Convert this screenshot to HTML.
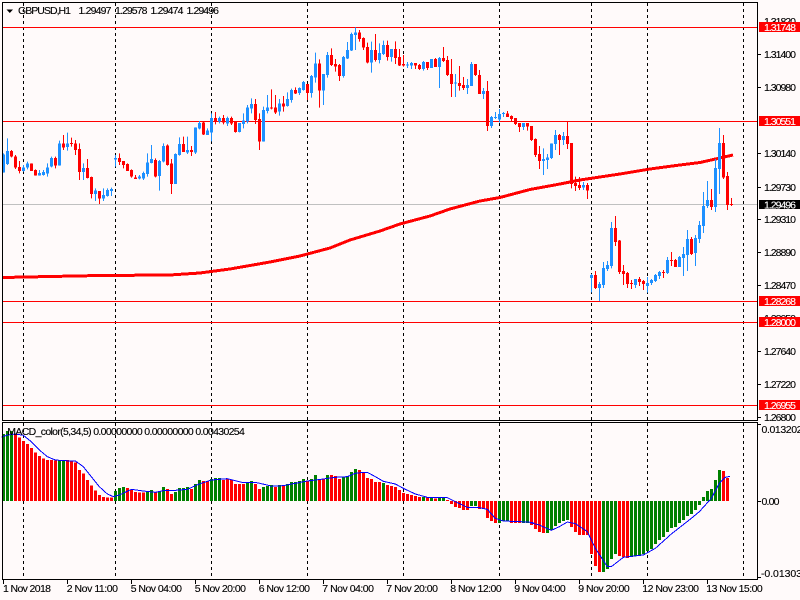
<!DOCTYPE html>
<html><head><meta charset="utf-8"><style>
html,body{margin:0;padding:0;background:#fffafa;width:800px;height:600px;overflow:hidden}
svg{display:block;position:absolute;left:0;top:0}
text{font-family:"Liberation Sans",sans-serif;font-size:10.5px;fill:#000;stroke:#000;stroke-width:.12px}
.w{fill:#fff;stroke:#fff}
path,line,polyline,rect{shape-rendering:crispEdges}
</style></head><body>
<svg width="800" height="600" viewBox="0 0 800 600">
<rect width="800" height="600" fill="#fffafa"/>
<!-- grid -->
<path d="M23.5 3V579M115.5 3V579M211.5 3V579M307.5 3V579M403.5 3V579M499.5 3V579M591.5 3V579M647.5 3V579M743.5 3V579" stroke="#000" stroke-width="1" stroke-dasharray="3 3" fill="none"/>
<!-- hlines -->
<path d="M3 27.5H757M3 121.5H757M3 301.5H757M3 322.5H757M3 405.5H757" stroke="#f00" stroke-width="1" fill="none"/>
<path d="M3 204.5H757" stroke="#c0c0c0" stroke-width="1" fill="none"/>
<!-- MA -->
<polyline fill="none" stroke="#f00" stroke-width="3" points="3,277.5 50,276.5 100,275.5 170,275 200,273 230,269 270,262 300,256 330,248 350,240 380,231 400,224 430,216 450,209 480,201 500,197.5 530,189.5 560,184 580,180 600,177 620,174 650,169 680,165 700,162.5 720,158 733,155"/>
<!-- candles -->
<g transform="scale(1,0.33333)" fill="none">
<path stroke="#1e90ff" stroke-width="1" d="M3.5 460V518M7.5 415V495M23.5 495V515M27.5 485V508M39.5 510V527M43.5 510V527M47.5 490V530M51.5 470V502M59.5 422V497M67.5 398V452M83.5 490V540M95.5 565V603M103.5 565V603M107.5 565V590M111.5 563V588M115.5 465V500M139.5 525V538M143.5 515V540M147.5 460V530M151.5 435V490M159.5 480V572M163.5 430V487M175.5 460V552M179.5 412V467M187.5 410V462M195.5 382V462M199.5 363V388M207.5 385V405M211.5 340V424M219.5 350V370M227.5 350V378M239.5 369V397M243.5 340V385M247.5 315V370M251.5 295V340M263.5 320V425M267.5 285V340M279.5 297V347M287.5 277V320M291.5 266V308M299.5 262V285M303.5 243V272M311.5 225V293M315.5 158V248M323.5 222V315M327.5 156V233M343.5 168V233M347.5 126V177M351.5 98V153M355.5 82V150M371.5 125V218M379.5 130V190M383.5 122V165M391.5 147V185M407.5 186V204M411.5 186V207M423.5 183V212M431.5 177V204M439.5 171V264M455.5 222V291M467.5 237V282M471.5 186V258M483.5 264V297M491.5 348V384M495.5 336V357M499.5 327V367M503.5 336V351M523.5 369V390M543.5 445V525M547.5 462V507M551.5 430V477M555.5 390V450M563.5 396V435M583.5 546V570M703.5 576V699M707.5 543V624M715.5 477V636M719.5 384V582"/>
<path stroke="#1e90ff" stroke-width="3" d="M3.5 463V518M7.5 453V492M23.5 502V513M27.5 490V503M39.5 519V527M43.5 516V525M47.5 502V520M51.5 474V500M59.5 430V497M67.5 430V441M83.5 504V516M95.5 572V582M103.5 585V595M107.5 570V588M111.5 567V573M115.5 474V478M139.5 530V535M143.5 519V535M147.5 487V522M151.5 477V489M159.5 483V528M163.5 438V485M175.5 462V552M179.5 432V465M187.5 450V457M195.5 382V458M199.5 369V386M207.5 392V405M211.5 354V398M219.5 354V365M227.5 354V370M239.5 369V396M243.5 362V372M247.5 323V365M251.5 312V326M263.5 330V425M267.5 322V333M279.5 310V335M287.5 297V318M291.5 270V300M299.5 264V279M303.5 246V270M311.5 228V279M315.5 190V232M323.5 222V272M327.5 165V225M343.5 171V228M347.5 150V175M351.5 102V152M355.5 97V105M371.5 150V188M379.5 159V180M383.5 135V162M391.5 147V171M407.5 194V197M411.5 189V197M423.5 186V207M431.5 177V204M439.5 174V201M455.5 248V250M467.5 255V264M471.5 192V258M483.5 273V282M491.5 351V378M495.5 351V354M499.5 342V358M503.5 339V342M523.5 369V381M543.5 477V483M547.5 472V480M551.5 430V474M555.5 405V432M563.5 408V420M583.5 555V562M703.5 618V678M707.5 600V618M715.5 504V621M719.5 429V507"/>
<path stroke="#f00" stroke-width="1" d="M11.5 450V472M15.5 465V507M19.5 483V520M31.5 490V513M35.5 508V527M55.5 470V505M63.5 405V450M71.5 413V440M75.5 420V465M79.5 430V540M87.5 477V535M91.5 530V595M99.5 573V612M119.5 460V495M123.5 483V505M127.5 490V513M131.5 508V533M135.5 525V537M155.5 475V532M167.5 433V497M171.5 477V582M183.5 410V456M191.5 438V468M203.5 365V405M215.5 336V373M223.5 345V373M231.5 350V375M235.5 364V398M255.5 297V372M259.5 340V450M271.5 268V328M275.5 285V342M283.5 288V335M295.5 262V282M307.5 252V300M319.5 178V323M331.5 145V198M335.5 177V215M339.5 192V243M359.5 90V125M363.5 112V150M367.5 128V190M375.5 102V185M387.5 122V182M395.5 124V192M399.5 147V198M403.5 165V200M415.5 189V207M419.5 192V210M427.5 186V210M435.5 174V201M443.5 141V186M447.5 168V228M451.5 177V291M459.5 198V272M463.5 231V270M475.5 192V228M479.5 210V282M487.5 243V393M507.5 333V351M511.5 346V363M515.5 354V375M519.5 369V396M527.5 369V392M531.5 378V423M535.5 415V471M539.5 438V507M559.5 402V465M567.5 366V447M571.5 429V565M575.5 530V573M579.5 531V570M587.5 549V597M711.5 567V630M723.5 405V537M727.5 516V630M731.5 594V618"/>
<path stroke="#f00" stroke-width="3" d="M11.5 453V470M15.5 470V503M19.5 501V513M31.5 490V513M35.5 510V527M55.5 474V497M63.5 430V442M71.5 429V432M75.5 430V450M79.5 447V516M87.5 504V534M91.5 531V582M99.5 573V595M119.5 474V486M123.5 483V495M127.5 492V513M131.5 510V530M135.5 532V537M155.5 480V530M167.5 437V495M171.5 490V552M183.5 432V456M191.5 450V456M203.5 368V404M215.5 354V365M223.5 354V367M231.5 354V370M235.5 364V396M255.5 312V360M259.5 357V425M271.5 322V325M275.5 322V338M283.5 310V320M295.5 270V280M307.5 252V279M319.5 190V272M331.5 165V195M335.5 192V200M339.5 195V228M359.5 97V117M363.5 114V143M367.5 141V188M375.5 150V180M387.5 135V171M395.5 147V174M399.5 171V197M403.5 192V197M415.5 189V197M419.5 195V207M427.5 186V204M435.5 177V201M443.5 174V183M447.5 180V225M451.5 222V252M459.5 249V258M463.5 255V264M475.5 192V225M479.5 225V282M487.5 273V378M507.5 340V351M511.5 348V357M515.5 354V372M519.5 369V381M527.5 369V380M531.5 378V420M535.5 417V465M539.5 462V483M559.5 405V420M567.5 408V432M571.5 429V552M575.5 549V558M579.5 555V564M587.5 555V572M711.5 600V621M723.5 429V532M727.5 528V615M731.5 612V615"/>
</g>
<g transform="translate(0,200) scale(1,0.33333)" fill="none">
<path stroke="#1e90ff" stroke-width="1" d="M591.5 222V277M599.5 246V303M603.5 186V264M607.5 183V213M611.5 66V205M635.5 237V264M647.5 231V278M651.5 237V255M655.5 222V246M659.5 213V237M667.5 171V222M679.5 168V201M683.5 141V228M687.5 90V213M695.5 105V198M699.5 63V129"/>
<path stroke="#1e90ff" stroke-width="3" d="M591.5 225V234M599.5 252V264M603.5 204V255M607.5 195V207M611.5 84V198M635.5 237V255M647.5 249V258M651.5 240V249M655.5 225V243M659.5 216V228M667.5 180V219M679.5 171V201M683.5 162V174M687.5 117V165M695.5 114V159M699.5 75V117"/>
<path stroke="#f00" stroke-width="1" d="M595.5 213V267M615.5 48V138M619.5 120V222M623.5 195V255M627.5 216V264M631.5 240V267M639.5 231V258M643.5 240V270M663.5 210V234M671.5 156V198M675.5 177V201M691.5 111V165"/>
<path stroke="#f00" stroke-width="3" d="M595.5 225V264M615.5 84V126M619.5 122V216M623.5 213V222M627.5 219V252M631.5 249V252M639.5 237V246M643.5 243V252M663.5 216V219M671.5 180V183M675.5 180V201M691.5 117V162"/>
</g>
<!-- MACD bars -->
<g transform="translate(0,420) scale(1,0.33333)" fill="none" stroke-width="3">
<path stroke="#008000" d="M3.5 243V42M7.5 243V33M11.5 243V33M59.5 243V120M63.5 243V120M115.5 243V213M119.5 243V204M123.5 243V201M147.5 243V213M151.5 243V210M159.5 243V213M163.5 243V201M175.5 243V216M179.5 243V204M183.5 243V204M187.5 243V201M195.5 243V192M199.5 243V180M211.5 243V177M215.5 243V174M219.5 243V174M247.5 243V186M251.5 243V183M263.5 243V201M267.5 243V198M271.5 243V195M279.5 243V195M287.5 243V192M291.5 243V186M295.5 243V186M299.5 243V183M303.5 243V177M311.5 243V177M315.5 243V165M327.5 243V165M343.5 243V171M347.5 243V168M351.5 243V156M355.5 243V147M383.5 243V189M423.5 243V231M431.5 243V233M439.5 243V233M443.5 243V233M471.5 243V258M475.5 243V258M499.5 243V309M503.5 243V303M507.5 243V303M523.5 243V309M527.5 243V309M547.5 243V339M551.5 243V330M555.5 243V318M559.5 243V309M563.5 243V303M567.5 243V300M603.5 243V456M607.5 243V447M611.5 243V417M615.5 243V402M631.5 243V411M635.5 243V408M639.5 243V408M643.5 243V402M647.5 243V393M651.5 243V387M655.5 243V372M659.5 243V360M663.5 243V351M667.5 243V336M671.5 243V324M675.5 243V321M679.5 243V309M683.5 243V300M687.5 243V288M691.5 243V282M695.5 243V270M699.5 243V255M703.5 243V231M707.5 243V213M711.5 243V207M715.5 243V180M719.5 243V150"/>
<path stroke="#f00" d="M15.5 243V42M19.5 243V53M23.5 243V63M27.5 243V72M31.5 243V84M35.5 243V97M39.5 243V108M43.5 243V115M47.5 243V120M51.5 243V120M55.5 243V122M67.5 243V120M71.5 243V122M75.5 243V128M79.5 243V150M83.5 243V160M87.5 243V180M91.5 243V197M95.5 243V212M99.5 243V225M103.5 243V231M107.5 243V233M111.5 243V233M127.5 243V204M131.5 243V210M135.5 243V216M139.5 243V218M143.5 243V218M155.5 243V218M167.5 243V207M171.5 243V222M191.5 243V207M203.5 243V183M207.5 243V183M223.5 243V180M227.5 243V176M231.5 243V180M235.5 243V192M239.5 243V192M243.5 243V192M255.5 243V192M259.5 243V207M275.5 243V201M283.5 243V195M307.5 243V183M319.5 243V177M323.5 243V177M331.5 243V165M335.5 243V168M339.5 243V177M359.5 243V150M363.5 243V158M367.5 243V174M371.5 243V177M375.5 243V186M379.5 243V186M387.5 243V195M391.5 243V198M395.5 243V201M399.5 243V210M403.5 243V219M407.5 243V222M411.5 243V225M415.5 243V228M419.5 243V231M427.5 243V233M435.5 243V236M447.5 243V240M451.5 243V252M455.5 243V261M459.5 243V264M463.5 243V270M467.5 243V270M479.5 243V267M483.5 243V267M487.5 243V294M491.5 243V303M495.5 243V309M511.5 243V309M515.5 243V309M519.5 243V309M531.5 243V315M535.5 243V327M539.5 243V336M543.5 243V339M571.5 243V321M575.5 243V336M579.5 243V345M583.5 243V345M587.5 243V345M591.5 243V402M595.5 243V438M599.5 243V456M619.5 243V408M623.5 243V411M627.5 243V414M723.5 243V153M727.5 243V174"/>
</g>
<!-- signal line -->
<g fill="none" stroke="#00f" stroke-width="3">
<polyline transform="translate(0,420) scale(0.33333)" points="4,52 22,45 46,42 70,46 94,65 118,90 142,110 166,120 190,122 226,123 250,140 274,170 298,200 322,222 340,230 358,225 394,208 430,213 466,217 490,212 514,212 562,208 598,192 634,180 682,176 730,188 766,187 810,197"/>
<polyline transform="translate(270,420) scale(0.33333)" points="0,199 40,197 76,190 112,183 160,177 196,172 232,170 256,160 280,157 292,157 316,170 340,184 376,192 400,205 436,222 472,232 532,233 556,245 592,262 628,263 652,268 676,295 700,303 772,306 790,308"/>
<polyline transform="translate(530,420) scale(0.33333)" points="0,308 28,315 64,331 88,320 112,306 136,311 172,335 196,385 232,440 244,440 280,412 304,409 340,405 376,385 424,342 484,295 508,275 544,235 568,190 586,172 600,169"/>
</g>
<!-- frames -->
<g stroke="#000" stroke-width="1" fill="none">
<path d="M2 2.5H758M2.5 2V421M757.5 2V421M2 420.5H758M2 422.5H758M2.5 422V580M757.5 422V580M2 579.5H758"/>
<!-- right ticks -->
<path d="M758 54.5H761M758 87.5H761M758 153.5H761M758 187.5H761M758 219.5H761M758 252.5H761M758 285.5H761M758 351.5H761M758 384.5H761M758 417.5H761M758 424.5H761M758 501.5H761M758 577.5H761"/>
<!-- bottom ticks -->
<path d="M3.5 580V584M67.5 580V584M131.5 580V584M195.5 580V584M259.5 580V584M323.5 580V584M387.5 580V584M451.5 580V584M515.5 580V584M579.5 580V584M643.5 580V584M707.5 580V584"/>
</g>
<polygon points="6.5,9.5 13,9.5 9.8,13" fill="#000"/>
<!-- header -->
<text x="18" y="14" textLength="53">GBPUSD,H1</text>
<text x="78.5" y="14" textLength="33">1.29497</text>
<text x="115" y="14" textLength="32.5">1.29578</text>
<text x="150.5" y="14" textLength="33">1.29474</text>
<text x="186.5" y="14" textLength="32.5">1.29496</text>
<text x="7.3" y="435" textLength="237.5">MACD_color(5,34,5) 0.00000000 0.00000000 0.00430254</text>
<!-- right axis -->
<text x="764" y="25" textLength="32">1.31820</text>
<text x="764" y="58" textLength="32">1.31400</text>
<text x="764" y="91" textLength="32">1.30980</text>
<text x="764" y="157" textLength="32">1.30140</text>
<text x="764" y="191" textLength="32">1.29730</text>
<text x="764" y="223" textLength="32">1.29310</text>
<text x="764" y="256" textLength="32">1.28890</text>
<text x="764" y="289" textLength="32">1.28470</text>
<text x="764" y="322" textLength="32">1.28050</text>
<text x="764" y="355" textLength="32">1.27640</text>
<text x="764" y="388" textLength="32">1.27220</text>
<text x="764" y="421" textLength="32">1.26800</text>
<text x="761.5" y="433" textLength="41">0.013202</text>
<text x="761.5" y="505" textLength="18">0.00</text>
<text x="761" y="577" textLength="41">-0.01303</text>
<!-- price tags -->
<rect x="759" y="22" width="41" height="10" fill="#f00"/>
<rect x="759" y="116" width="41" height="10" fill="#f00"/>
<rect x="759" y="200" width="41" height="9" fill="#000"/>
<rect x="759" y="296" width="41" height="10" fill="#f00"/>
<rect x="759" y="317" width="41" height="10" fill="#f00"/>
<rect x="759" y="400" width="41" height="10" fill="#f00"/>
<text class="w" x="764" y="31" textLength="32">1.31748</text>
<text class="w" x="764" y="125" textLength="32">1.30551</text>
<text class="w" x="764" y="208.5" textLength="32">1.29496</text>
<text class="w" x="764" y="305" textLength="32">1.28268</text>
<text class="w" x="764" y="326" textLength="32">1.28000</text>
<text class="w" x="764" y="409" textLength="32">1.26955</text>
<!-- time axis -->
<text x="3" y="592" textLength="48">1 Nov 2018</text>
<text x="66.7" y="592" textLength="51.3">2 Nov 11:00</text>
<text x="130.7" y="592" textLength="51.3">5 Nov 04:00</text>
<text x="194.7" y="592" textLength="51.3">5 Nov 20:00</text>
<text x="258.7" y="592" textLength="51.3">6 Nov 12:00</text>
<text x="322.3" y="592" textLength="51.7">7 Nov 04:00</text>
<text x="386.3" y="592" textLength="51.7">7 Nov 20:00</text>
<text x="450.3" y="592" textLength="51.4">8 Nov 12:00</text>
<text x="514.3" y="592" textLength="51.4">9 Nov 04:00</text>
<text x="578.3" y="592" textLength="51.4">9 Nov 20:00</text>
<text x="642.3" y="592" textLength="56.7">12 Nov 23:00</text>
<text x="706.3" y="592" textLength="56.4">13 Nov 15:00</text>
</svg>
</body></html>
